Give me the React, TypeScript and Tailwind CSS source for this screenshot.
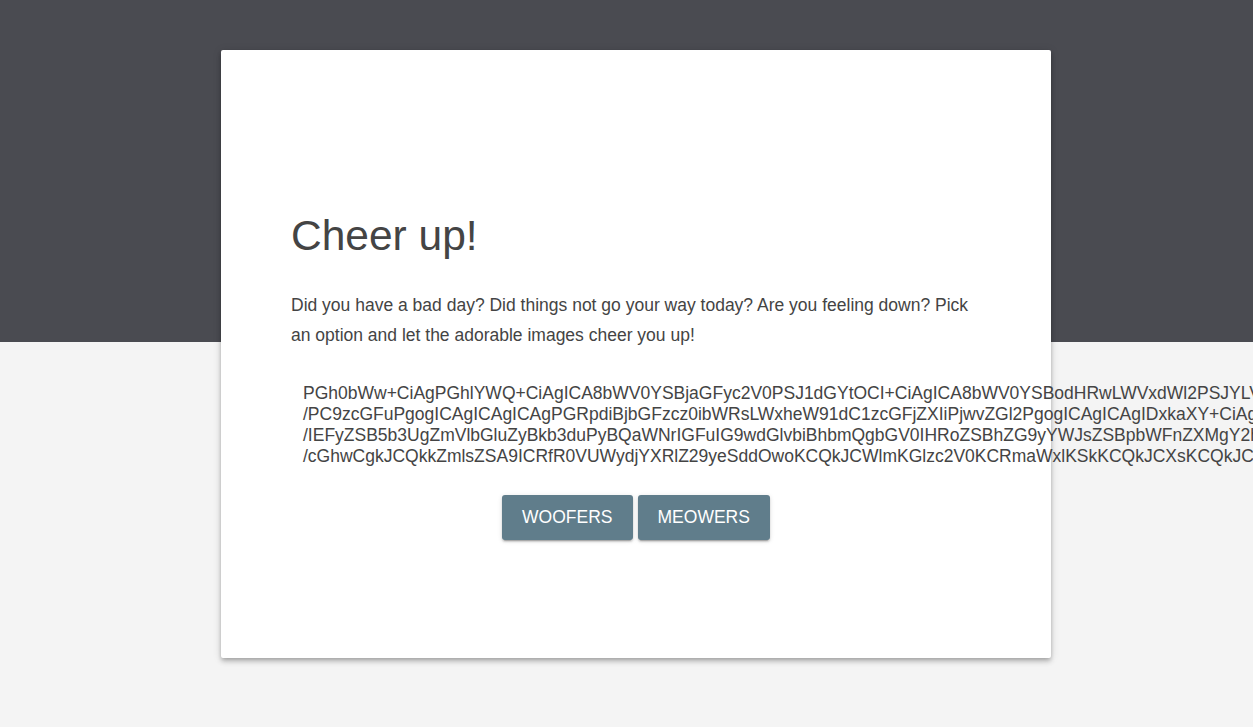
const encoded = [
  'PGh0bWw+CiAgPGhlYWQ+CiAgICA8bWV0YSBjaGFyc2V0PSJ1dGYtOCI+CiAgICA8bWV0YSBodHRwLWVxdWl2PSJYLVVBLUNvbXBhdGlibGUiIGNvbnRlbnQ9IklFPWVkZ2UiPgo',
  '/PC9zcGFuPgogICAgICAgICAgPGRpdiBjbGFzcz0ibWRsLWxheW91dC1zcGFjZXIiPjwvZGl2PgogICAgICAgIDxkaXY+CiAgICAgICAgICA8L2Rpdj4KICAgICAgPC9oZWFkZXI+',
  '/IEFyZSB5b3UgZmVlbGluZyBkb3duPyBQaWNrIGFuIG9wdGlvbiBhbmQgbGV0IHRoZSBhZG9yYWJsZSBpbWFnZXMgY2hlZXIgeW91IHVwIQoKICAgICAgICAgIDwvcD4K',
  '/cGhwCgkJCQkkZmlsZSA9ICRfR0VUWydjYXRlZ29yeSddOwoKCQkJCWlmKGlzc2V0KCRmaWxlKSkKCQkJCXsKCQkJCQlpbmNsdWRlKCRmaWxlKTsKCQkJCX0K',
]

function RaisedButton({ label }: { label: string }) {
  return (
    <button className="h-[45px] px-5 rounded-[3px] bg-[#607d8b] text-white text-[17.5px] uppercase shadow-[0_2px_2px_0_rgba(0,0,0,0.14),0_3px_1px_-2px_rgba(0,0,0,0.2),0_1px_5px_0_rgba(0,0,0,0.12)]">
      {label}
    </button>
  )
}

export default function App() {
  return (
    <div className="w-full h-[727px] overflow-hidden pt-[50px] bg-[linear-gradient(to_bottom,#4a4b51_342px,#f4f4f4_342px)] font-['Liberation_Sans',Arial,sans-serif] text-[#444]">
      {/* Card */}
      <div className="ml-[221px] w-[830px] h-[608px] bg-white rounded-[2px] px-[70px] pt-[161px] shadow-[0_4px_5px_0_rgba(0,0,0,0.14),0_1px_10px_0_rgba(0,0,0,0.12),0_2px_4px_-1px_rgba(0,0,0,0.2)]">
        <h1 className="text-[42.5px] leading-[50px]">Cheer up!</h1>
        <p className="mt-[29px] text-[17.5px] leading-[30px]">
          Did you have a bad day? Did things not go your way today? Are you feeling down? Pick an option and let the
          adorable images cheer you up!
        </p>

        {/* Raw page source, base64 */}
        <div className="mt-[33px] ml-3 text-[17.5px] leading-[21px]">
          {encoded.map(line => (
            <div key={line} className="whitespace-nowrap">{line}</div>
          ))}
        </div>

        <div className="mt-[28px] flex justify-center gap-[5px]">
          <RaisedButton label="Woofers" />
          <RaisedButton label="Meowers" />
        </div>
      </div>
    </div>
  )
}
